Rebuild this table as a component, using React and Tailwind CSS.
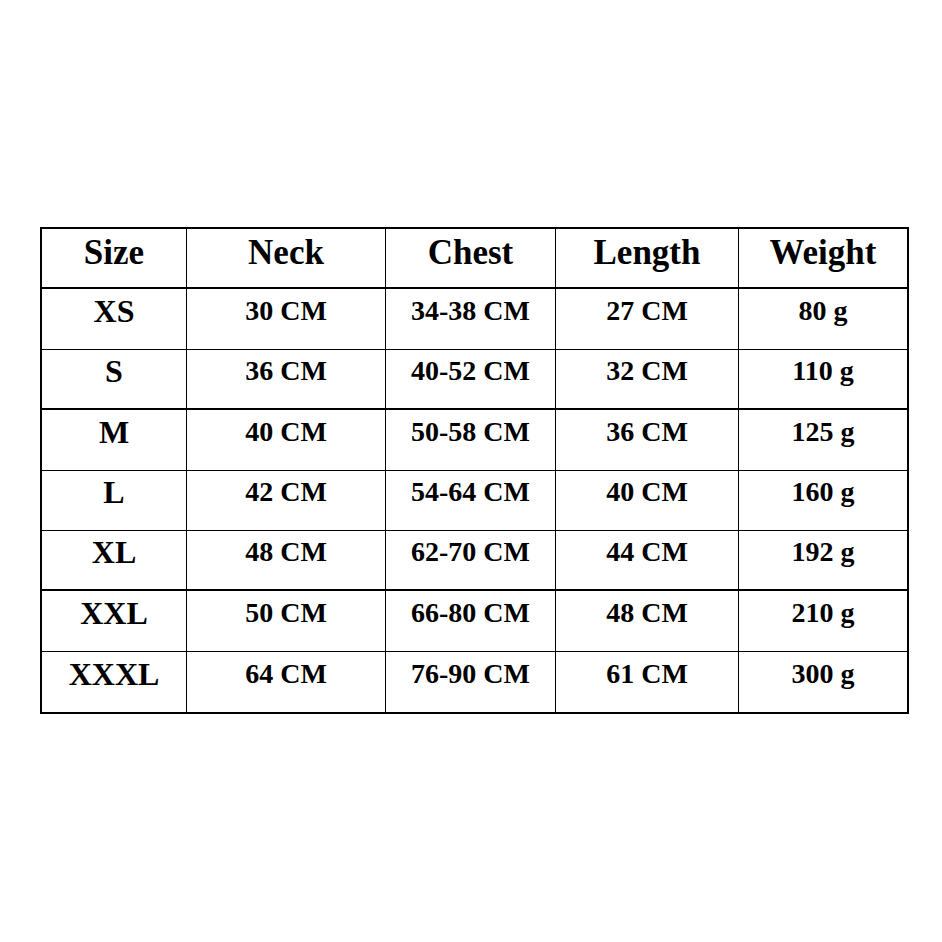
import React from 'react';

const headers = ['Size', 'Neck', 'Chest', 'Length', 'Weight'];

const rows = [
  ['XS', '30 CM', '34-38 CM', '27 CM', '80 g'],
  ['S', '36 CM', '40-52 CM', '32 CM', '110 g'],
  ['M', '40 CM', '50-58 CM', '36 CM', '125 g'],
  ['L', '42 CM', '54-64 CM', '40 CM', '160 g'],
  ['XL', '48 CM', '62-70 CM', '44 CM', '192 g'],
  ['XXL', '50 CM', '66-80 CM', '48 CM', '210 g'],
  ['XXXL', '64 CM', '76-90 CM', '61 CM', '300 g'],
];

// rows whose bottom line looks heavier in the picture
const thick = [0, 2, 5];

const Cell = ({ children, last, bottom, heavy, className }) => (
  <div
    className={
      'flex items-center justify-center border-black ' +
      (last ? '' : 'border-r ') +
      (bottom ? (heavy ? 'border-b-2 ' : 'border-b ') : '') +
      className
    }
  >
    {children}
  </div>
);

const App = () => {
  return (
    <div
      className="w-[942px] h-[942px] bg-white pt-[227px] pl-[40px] text-black font-bold"
      style={{ fontFamily: '"Liberation Serif", "Times New Roman", serif' }}
    >
      <div className="grid grid-cols-[145px_199px_170px_183px_168px] grid-rows-8 w-[869px] h-[487px] border-2 border-black">
        {headers.map((h, i) => (
          <Cell key={h} last={i === 4} bottom heavy className="text-[35px] pb-[9px]">
            {h}
          </Cell>
        ))}
        {rows.map((r, ri) =>
          r.map((v, ci) => (
            <Cell
              key={ri + '-' + ci}
              last={ci === 4}
              bottom={ri < rows.length - 1}
              heavy={thick.includes(ri + 1)}
              className={ci === 0 ? 'text-[32px] pb-[16px]' : 'text-[28px] pb-[16px]'}
            >
              {v}
            </Cell>
          ))
        )}
      </div>
    </div>
  );
};

export default App;
